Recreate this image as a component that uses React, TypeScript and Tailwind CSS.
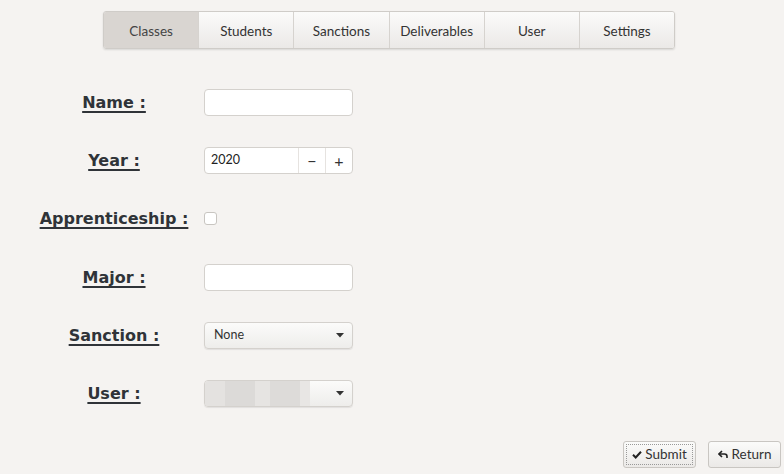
import React from "react";

const tabs = ["Classes", "Students", "Sanctions", "Deliverables", "User", "Settings"];

function Label(props: { text: string }) {
  return (
    <div className="flex w-[172px] shrink-0 justify-center pt-[1px]">
      <span className="font-['DejaVu_Sans',sans-serif] text-[16px] font-bold text-[#2f3338] underline decoration-2 underline-offset-[3px]">
        {props.text}
      </span>
    </div>
  );
}

function Caret() {
  return (
    <svg width="8" height="5" viewBox="0 0 8 5" className="mr-[8px]">
      <path d="M0 0h8L4 4.5z" fill="#333" />
    </svg>
  );
}

export default function App() {
  return (
    <div className="h-[474px] w-[784px] overflow-hidden bg-[#f5f3f1] font-['Lato',sans-serif] text-[13px] text-[#333]">
      <div className="flex pl-[103px] pt-[11px]">
        <div className="flex h-[38px] w-[572px] overflow-hidden rounded-[3px] border border-[#cfccc8] shadow-[0_1px_2px_rgba(0,0,0,0.12)]">
          {tabs.map((t, i) => (
            <div
              key={t}
              className={`flex flex-1 items-center justify-center pt-[2px] text-[13.5px] ${i > 0 ? "border-l border-[#d6d3cf]" : ""} ${
                i === 0 ? "bg-[#d9d5d1] text-[#444]" : "bg-gradient-to-b from-[#fbfbfa] to-[#ebe9e7]"
              }`}
            >
              {t}
            </div>
          ))}
        </div>
      </div>

      <div className="mt-[40px] flex flex-col gap-[31px] pl-[28px]">
        <div className="flex h-[27px] items-center">
          <Label text="Name :" />
          <div className="ml-[4px] h-[27px] w-[149px] rounded-[4px] border border-[#d4d1cd] bg-white" />
        </div>

        <div className="flex h-[27px] items-center">
          <Label text="Year :" />
          <div className="ml-[4px] flex h-[27px] w-[149px] overflow-hidden rounded-[4px] border border-[#d4d1cd] bg-white">
            <div className="flex flex-1 items-center pl-[6px] text-[12.5px] text-[#222]">2020</div>
            <div className="flex w-[27px] items-center justify-center border-l border-[#e6e3e0] text-[16px] text-[#333]">
              −
            </div>
            <div className="flex w-[27px] items-center justify-center border-l border-[#e6e3e0] text-[16px] text-[#333]">
              +
            </div>
          </div>
        </div>

        <div className="flex h-[27px] items-center">
          <Label text="Apprenticeship :" />
          <div className="ml-[4px] h-[13px] w-[13px] rounded-[3px] border border-[#c8c5c1] bg-white" />
        </div>

        <div className="mt-[1px] flex h-[27px] items-center">
          <Label text="Major :" />
          <div className="ml-[4px] h-[27px] w-[149px] rounded-[4px] border border-[#d4d1cd] bg-white" />
        </div>

        <div className="flex h-[27px] items-center">
          <Label text="Sanction :" />
          <div className="ml-[4px] flex h-[27px] w-[149px] items-center justify-between rounded-[4px] border border-[#d4d1cd] bg-gradient-to-b from-[#fbfbfa] to-[#eeedeb] pl-[9px] text-[12.5px] text-[#333] shadow-[0_1px_1px_rgba(0,0,0,0.08)]">
            <span>None</span>
            <Caret />
          </div>
        </div>

        <div className="flex h-[27px] items-center">
          <Label text="User :" />
          <div className="ml-[4px] flex h-[27px] w-[149px] items-center justify-between overflow-hidden rounded-[4px] border border-[#d4d1cd] bg-gradient-to-b from-[#fbfbfa] to-[#eeedeb] shadow-[0_1px_1px_rgba(0,0,0,0.08)]">
            <div className="flex h-full">
              <div className="w-[20px] bg-[#e4e2e0]" />
              <div className="w-[30px] bg-[#dcdad8]" />
              <div className="w-[15px] bg-[#e6e4e2]" />
              <div className="w-[30px] bg-[#dddbd9]" />
              <div className="w-[10px] bg-[#e8e6e4]" />
            </div>
            <Caret />
          </div>
        </div>
      </div>

      <div className="mt-[34px] flex justify-end gap-[12px] pr-[3px]">
        <div className="flex h-[27px] w-[73px] items-center justify-center gap-[3px] rounded-[3px] border border-[#c9c6c2] bg-gradient-to-b from-[#fbfbfa] to-[#ebe9e7] text-[13.5px] outline outline-1 outline-offset-[-4px] outline-dotted outline-[#999]">
          <svg width="10" height="9" viewBox="0 0 10 9">
            <path d="M1 4.8l2.7 2.7L9 1.8" stroke="#222" strokeWidth="2" fill="none" />
          </svg>
          <span>Submit</span>
        </div>
        <div className="flex h-[27px] w-[73px] items-center justify-center gap-[4px] rounded-[3px] border border-[#c9c6c2] bg-gradient-to-b from-[#fbfbfa] to-[#ebe9e7] text-[13.5px]">
          <svg width="10" height="9" viewBox="0 0 10 9">
            <path d="M4 1L1 4l3 3" stroke="#222" strokeWidth="1.6" fill="none" />
            <path d="M1.5 4H6.5a2.5 2.5 0 0 1 2.5 2.5V8" stroke="#222" strokeWidth="1.6" fill="none" />
          </svg>
          <span>Return</span>
        </div>
      </div>
    </div>
  );
}
